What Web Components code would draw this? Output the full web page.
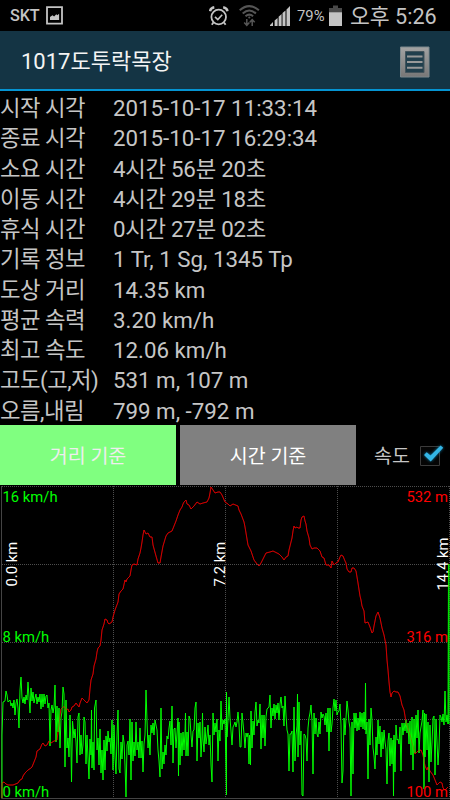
<!DOCTYPE html>
<html lang="ko">
<head>
<meta charset="utf-8">
<title>1017도투락목장</title>
<style>
  html, body {
    margin: 0;
    background: #000;
    overflow: hidden;
  }
  body {
    width: 450px;
    height: 800px;
    font-family: Roboto, "Noto Sans CJK KR", sans-serif;
    color: #c6c6c6;
  }
</style>
</head>
<body>
<track-screen></track-screen>

<script>
// Phone status bar
class StatusBar extends HTMLElement {
  constructor() {
    super();
    const root = this.attachShadow({ mode: 'open' });
    root.innerHTML = `
      <style>
        :host {
          display: flex;
          align-items: center;
          box-sizing: border-box;
          height: 31px;
          padding: 0 12px 0 10px;
          background: #000;
          color: #c4c4c4;
          white-space: nowrap;
        }
        svg { display: block; flex: none; }
        .carrier { font-size: 16.2px; font-weight: 500; width: 36px; letter-spacing: -.1px; }
        .gap { flex: 1; }
        .alarm { margin-right: 10px; }
        .wifi { margin-right: 10px; }
        .signal { margin-right: 7px; }
        .percent { font-size: 14.8px; width: 32px; padding-top: 1px; }
        .battery { margin-right: 8px; }
        .clock { font-size: 21.6px; line-height: 31px; width: 88px; padding-top: 1px; }
      </style>
      <span class="carrier">SKT</span>
      <svg width="17" height="19" viewBox="0 0 17 19">
        <path d="M1 1.2h15v16.5H1z" fill="none" stroke="#c4c4c4" stroke-width="1.8"/>
        <path d="M4 14v-3l2.5-1.8 1.6 1.3 2.2-2.2 1 1 1.8-1.6V14z" fill="#c4c4c4"/>
      </svg>
      <span class="gap"></span>
      <svg class="alarm" width="20" height="20" viewBox="0 0 20 20" fill="none" stroke="#c4c4c4">
        <circle cx="9.7" cy="11" r="7.3" stroke-width="1.8"/>
        <path d="M6 10.8l2.8 2.7 4.4-4.7" stroke-width="1.6"/>
        <path d="M1 5.2Q1.5 2 5.3 1.3M18.5 5.2Q18 2 14.2 1.3" stroke-width="2.4"/>
        <path d="M4.4 16.4l-1.6 2.4M15 16.4l1.6 2.4" stroke-width="1.8"/>
      </svg>
      <svg class="wifi" width="21" height="22" viewBox="0 0 21 22" fill="none" stroke="#555">
        <path d="M.7 5.2Q10.3-3 19.9 5.2M3.7 8.4Q10.3 2.5 16.9 8.4M6.5 11.3Q10.3 8 14.1 11.3" stroke-width="2"/>
        <circle cx="10.3" cy="12.5" r="1.1" fill="#555" stroke="none"/>
        <path d="M7.8 14v6M5.2 17.5l2.6 2.8 2.6-2.8M13.2 21v-6M10.8 17.3l2.4-2.6 2.5 2.6" stroke-width="1.5"/>
      </svg>
      <svg class="signal" width="20" height="20" viewBox="0 0 20 20" fill="#c4c4c4">
        <path d="M0 20v-1l3-2.9V20zM4.6 20v-5.4l3-2.7V20zM8.600 20v-9.300l3-2.700V20zM12.500 20V7.100l3-2.700V20zM16.500 20V3.500L20 0v20z"/>
      </svg>
      <span class="percent">79%</span>
      <svg class="battery" width="13" height="21" viewBox="0 0 13 21">
        <path d="M0 3h4V.5h5V3h4v5H0z" fill="#494949"/>
        <path d="M0 7.3h13V21H0z" fill="#c4c4c4"/>
      </svg>
      <span class="clock">오후 5:26</span>
    `;
  }
}
customElements.define('status-bar', StatusBar);

// Title bar with the list button
class ActionBar extends HTMLElement {
  constructor() {
    super();
    const root = this.attachShadow({ mode: 'open' });
    root.innerHTML = `
      <style>
        :host {
          display: flex;
          align-items: center;
          justify-content: space-between;
          box-sizing: border-box;
          height: 60px;
          padding: 3px 19px 0 21px;
          background: #143444;
          border-bottom: 2px solid #0594d2;
          color: #f4f4f4;
          font-size: 22px;
          line-height: 30px;
        }
        svg { display: block; }
      </style>
      <slot></slot>
      <svg width="32" height="32" viewBox="0 0 32 32">
        <defs>
          <linearGradient id="metal" x1="0" y1="0" x2="0" y2="1">
            <stop offset="0" stop-color="#a3a3a3"/>
            <stop offset="1" stop-color="#777"/>
          </linearGradient>
        </defs>
        <path d="M1.5 1H30v30H1.5z" fill="url(#metal)" stroke="#7a878c"/>
        <path d="M6.5 5.5h18.500v21H6.500z" fill="#213f4d" stroke="#43545c"/>
        <path d="M8 10.500h15.500M8 16h15.500M8 21.700h15.500" stroke="#999" stroke-width="2"/>
      </svg>
    `;
  }
}
customElements.define('action-bar', ActionBar);

// One label/value line
class StatRow extends HTMLElement {
  constructor() {
    super();
    const root = this.attachShadow({ mode: 'open' });
    root.innerHTML = `
      <style>
        :host {
          display: grid;
          grid-template-columns: 113px 1fr;
          height: 30.25px;
          line-height: 30.25px;
          font-size: 22.3px;
          white-space: nowrap;
        }
        .label { letter-spacing: -.5px; }
        :host([duration]) .value { letter-spacing: -.25px; }
      </style>
      <span class="label"><slot name="label"></slot></span>
      <span class="value"><slot></slot></span>
    `;
  }
}
customElements.define('stat-row', StatRow);

class ModeButton extends HTMLElement {
  constructor() {
    super();
    const root = this.attachShadow({ mode: 'open' });
    root.innerHTML = `
      <style>
        :host {
          display: flex;
          align-items: center;
          justify-content: center;
          box-sizing: border-box;
          width: 176px;
          height: 60px;
          padding-bottom: 2px;
          background: #808080;
          color: #fff;
          font-size: 19.5px;
        }
        :host([selected]) {
          background: #80ff80;
          color: #eee;
        }
      </style>
      <slot></slot>
    `;
  }
}
customElements.define('mode-button', ModeButton);

class CheckOption extends HTMLElement {
  constructor() {
    super();
    const root = this.attachShadow({ mode: 'open' });
    root.innerHTML = `
      <style>
        :host {
          display: flex;
          align-items: center;
          gap: 8px;
          padding-bottom: 2px;
          font-size: 19.5px;
          letter-spacing: .1px;
        }
        svg { display: block; }
        .check { filter: drop-shadow(0 0 1.5px #1280ad); }
      </style>
      <slot></slot>
      <svg width="27" height="25" viewBox="0 0 27 25">
        <path d="M2.500 4.500h19v19h-19z" fill="#050505" stroke="#3b3b3b"/>
        <path class="check" d="M6 13l2.700-2.800 3.800 3.300L22.600 3.500l2.600 2.300L12.700 19.500z" fill="#33b5e5"/>
      </svg>
    `;
  }
}
customElements.define('check-option', CheckOption);

// x,y pairs of the two traces
const ALTITUDE = `2,798 2,783 4,782 6,784 8,785 13,785 18,783 20,780 22,779 23,776 25,773 28,770 31,768 32,767
  34,762 36,757 37,751 40,749 42,744 43,743 45,746 47,745 49,741 51,743 54,741 57,740 58,732 59,725 60,715 61,709
  63,707 65,707 66,710 68,709 69,712 71,710 72,707 74,706 76,703 79,707 80,703 82,698 85,701 87,703 89,700
  90,689 91,680 93,674 94,666 96,659 97,652 98,648 100,646 101,640 102,630 104,624 105,619 107,620 108,623 109,624
  112,622 113,617 115,610 118,602 119,594 121,591 123,589 125,580 126,582 127,579 130,576 131,570 132,565 134,564
  137,565 138,559 140,553 141,548 142,542 143,535 144,530 146,534 148,533 150,537 152,537 153,545 156,556
  158,563 160,563 161,557 163,546 166,536 168,533 172,531 174,526 176,521 178,515 180,510 182,507 183,504 184,502
  186,500 187,504 189,505 191,509 194,506 197,502 200,504 203,503 207,502 209,498 210,493 211,487 213,490 215,493
  218,492 220,492 222,495 225,502 228,504 230,506 233,504 238,506 239,510 241,514 244,522 245,527 246,533 248,545
  251,551 252,554 254,560 257,564 259,566 261,563 263,559 266,553 270,552 273,551 275,552 279,554 282,557 284,560
  286,557 288,556 289,550 290,546 292,538 293,531 294,526 295,528 297,527 298,528 300,528 301,520 302,517
  304,516 305,521 306,524 307,531 309,538 310,545 312,549 314,548 317,548 320,551 322,557 324,558 326,565 329,565
  331,568 332,561 334,565 336,563 338,562 340,557 341,555 343,556 345,561 346,563 347,569 349,572 351,572 352,568
  354,568 356,571 358,583 360,596 361,600 362,606 364,611 365,623 368,622 370,627 372,633 373,632 374,626
  376,616 378,612 380,618 382,628 384,635 385,640 386,645 387,660 388,670 389,682 390,692 391,697 392,693
  394,691 396,692 398,692 400,696 402,705 404,710 406,722 408,729 410,735 413,746 415,754 416,753 418,751
  421,750 423,755 425,766 427,770 428,767 430,771 433,775 435,780 437,785 440,782 442,783 443,788 445,790 448,787`;

const SPEED = `2,798 2,735 3,702 5,701 6,691 7,695 8,702 10,700 11,706 12,703 13,708 14,700 15,715 16,703 17,699
  18,708 19,728 20,690 21,677 22,698 23,703 24,697 25,704 26,695 27,700 28,682 29,697 30,713 31,688 32,701
  33,692 34,703 35,698 36,694 37,704 38,697 39,702 40,694 41,709 42,694 43,707 44,694 45,704 46,696 47,695 48,708
  49,703 50,746 51,710 52,705 53,713 54,707 55,685 56,742 57,706 58,732 59,708 60,748 61,718 62,712 63,687 64,694
  65,767 66,700 67,748 68,738 69,757 70,715 71,750 71.5,782 72.5,721 74,738 75,729 76,742 77,763 78,717 79,713
  80,755 81,735 82,754 83,745 84,717 85,722 86,764 87,735 88,758 89,779 90,739 91,755 91.5,710 92,768
  93,742 94,770 94.5,708 96,700 97,750 98,738 99,765 100,729 101,773 102,750 103,780 104,740 105,770 106,736
  107,751 108,731 109,742 110,738 111,754 112,720 113,770 114,725 115,757 116,774 117,736 118,710 119,769 120,773
  121,742 122,759 123,735 124,742 125,765 126,797 127,745 128,741 129,755 130,719 131,780 132,722 133,761 134,742
  135,756 136,722 137,750 138,742 139,758 140,728 141,758 142,741 143,772 144,744 145,735 146,690 147,721 148,748
  149,735 150,755 151,725 152,733 153,723 154,735 155,720 156,725 157,730 158,750 159,761 160,777 161,708
  162,769 163,752 164,764 165,745 166,755 167,736 168,739 169,728 170,721 171,745 172,706 173,763 174,729 175,728
  176,748 177,733 178,718 178.5,776 179,722 180,765 181,733 182,756 183,732 184,750 185,732 185.5,713 186,756
  187,732 188,756 189,716 190,719 191,735 192,747 193,731 194,730 195,708 196,702 197,761 198,723 199,738
  200,722 201,757 202,737 202.5,713 203,739 204,752 205,727 206,744 207,736 208,725 209,745 210,735 211,765
  212,782 213,713 214,735 215,723 216,732 217,719 218,761 219,730 220,741 221,701 222,730 223,720 224,724 225,719
  226.5,795 226.5,692 227,737 228,720 229,697 230,718 231,731 232,745 233,727 234,725 235,722 236,727 237,722
  238,712 239,724 240,747 241,747 242,713 243,723 244,734 245,748 246,733 247,737 248,733 249,764 249.5,735
  250.5,765 251,711 252,748 253,721 254,735 255,712 256,702 257,726 258,720 259,723 260,704 261,749
  262,715 263,738 264,715 265,746 266,717 267,709 268,708 269,707 270,695 271,728 272,708 273,716 274,704 275,719
  276,705 277,713 278,703 279,720 280,704 281,697 282,708 283,706 284,726 285,696 286,715 287,730 288,734 289,771
  290,734 291,734 292,731 293,772 294,707 295,761 296,735 297,726 297.5,694 298,757 299,702 300,745 301,731
  302,795 303,796 304,734 305,735 306,739 307,761 308,728 309,718 310,713 311,705 312,721 313,774 314,713
  315,734 316,718 317,734 318,737 319,722 320,734 321,712 322,718 323,714 324,716 325,725 326,713 327,732
  328,708 329,751 330,708 331,732 332,724 333,708 334,699 335,711 336,700 337,715 338,712 339,711 340,704
  341,725 342,783 343,771 344,718 345,735 346,718 347,701 348,710 349,722 350,728 351,796 352,722 353,774
  354,713 355,728 356,713 357,731 358,718 359,730 360,712 361,727 362,713 363,729 364,712 365,730 365.5,683
  366,734 367,722 368,779 369,719 370,745 371,708 372,720 373,748 374,756 375,769 376,737 377,755 378,720
  379,744 380,726 381,757 382,732 383,749 384,730 385,742 386,749 387,784 388,741 389,733 390,766 391,738
  392,764 393,740 393.5,796 394,735 395,772 396,725 397,740 398,739 399,744 400,727 401,771 402,723 403,735
  404,723 405,731 406,720 407,733 408,723 409,744 410,721 411,755 412,717 413,770 414,719 415,753 416,715
  417,738 418,710 419,753 420,733 421,727 422,721 423,710 424,789 424.5,713 425,757 426,714 427,750
  428,722 429,782 430,725 431,762 432,743 433,718 434,716 435,775 436,719 437,742 438,765 439,748 440,715
  441,717 442,722 443,714 444,725 445,691 446,722 447,715 448,724 448.5,564`;

class TrackChart extends HTMLElement {
  constructor() {
    super();
    const root = this.attachShadow({ mode: 'open' });
    root.innerHTML = `
      <style>
        :host { display: block; height: 315px; }
        svg { display: block; }
        text { font-size: 14.8px; }
        .grid { stroke: #4d4d4d; stroke-dasharray: 1 1; }
        .axis { stroke: #444; }
        .trace { fill: none; stroke-linejoin: bevel; }
        .speed { fill: #0f0; }
        .altitude { fill: #f00; text-anchor: end; }
        .distance { fill: #fff; }
      </style>
      <svg width="450" height="315" viewBox="0 485 450 315">
        <g class="grid">
          <line x1="2" x2="450" y1="486.5" y2="486.5"/>
          <line x1="2" x2="450" y1="564.5" y2="564.5"/>
          <line x1="2" x2="450" y1="642.5" y2="642.5"/>
          <line x1="2" x2="450" y1="719.5" y2="719.5"/>
          <line x1="113.5" x2="113.5" y1="486" y2="798"/>
          <line x1="225.5" x2="225.5" y1="486" y2="798"/>
          <line x1="337.5" x2="337.5" y1="486" y2="798"/>
          <line x1="449.5" x2="449.5" y1="486" y2="798"/>
        </g>
        <path class="axis" fill="none" d="M1.5 486v312.5h448.5"/>
        <polyline class="trace" stroke="#c80000" points="${ALTITUDE}"/>
        <polyline class="trace" stroke="#0f0" points="${SPEED}"/>
        <path d="M448.8 564v160" stroke="#00e000" stroke-width="1.6"/>
        <polyline class="trace" stroke="#d80000" stroke-opacity=".4" points="${ALTITUDE}"/>
        <text class="speed" x="2.5" y="502">16 km/h</text>
        <text class="speed" x="2.5" y="641.5">8 km/h</text>
        <text class="speed" x="2.5" y="797">0 km/h</text>
        <text class="altitude" x="448" y="502">532 m</text>
        <text class="altitude" x="448" y="641.5">316 m</text>
        <text class="altitude" x="448" y="797">100 m</text>
        <text class="distance" transform="translate(16.5 586.5) rotate(-90)">0.0 km</text>
        <text class="distance" transform="translate(224.5 586.5) rotate(-90)">7.2 km</text>
        <text class="distance" transform="translate(448 590.5) rotate(-90)">14.4 km</text>
      </svg>
    `;
  }
}
customElements.define('track-chart', TrackChart);

class TrackScreen extends HTMLElement {
  constructor() {
    super();
    const root = this.attachShadow({ mode: 'open' });
    root.innerHTML = `
      <style>
        :host {
          display: flex;
          flex-direction: column;
          width: 450px;
          height: 800px;
        }
        .stats { height: 332px; padding-top: 2px; }
        .modes { display: flex; gap: 4px; height: 60px; }
        check-option { margin-left: 14px; }
      </style>
      <status-bar></status-bar>
      <action-bar>1017도투락목장</action-bar>
      <div class="stats">
        <stat-row><span slot="label">시작 시각</span>2015-10-17 11:33:14</stat-row>
        <stat-row><span slot="label">종료 시각</span>2015-10-17 16:29:34</stat-row>
        <stat-row duration><span slot="label">소요 시간</span>4시간 56분 20초</stat-row>
        <stat-row duration><span slot="label">이동 시간</span>4시간 29분 18초</stat-row>
        <stat-row duration><span slot="label">휴식 시간</span>0시간 27분 02초</stat-row>
        <stat-row><span slot="label">기록 정보</span>1 Tr, 1 Sg, 1345 Tp</stat-row>
        <stat-row><span slot="label">도상 거리</span>14.35 km</stat-row>
        <stat-row><span slot="label">평균 속력</span>3.20 km/h</stat-row>
        <stat-row><span slot="label">최고 속도</span>12.06 km/h</stat-row>
        <stat-row><span slot="label">고도(고,저)</span>531 m, 107 m</stat-row>
        <stat-row><span slot="label">오름,내림</span>799 m, -792 m</stat-row>
      </div>
      <div class="modes">
        <mode-button selected>거리 기준</mode-button>
        <mode-button>시간 기준</mode-button>
        <check-option>속도</check-option>
      </div>
      <track-chart></track-chart>
    `;
  }
}
customElements.define('track-screen', TrackScreen);
</script>
</body>
</html>
